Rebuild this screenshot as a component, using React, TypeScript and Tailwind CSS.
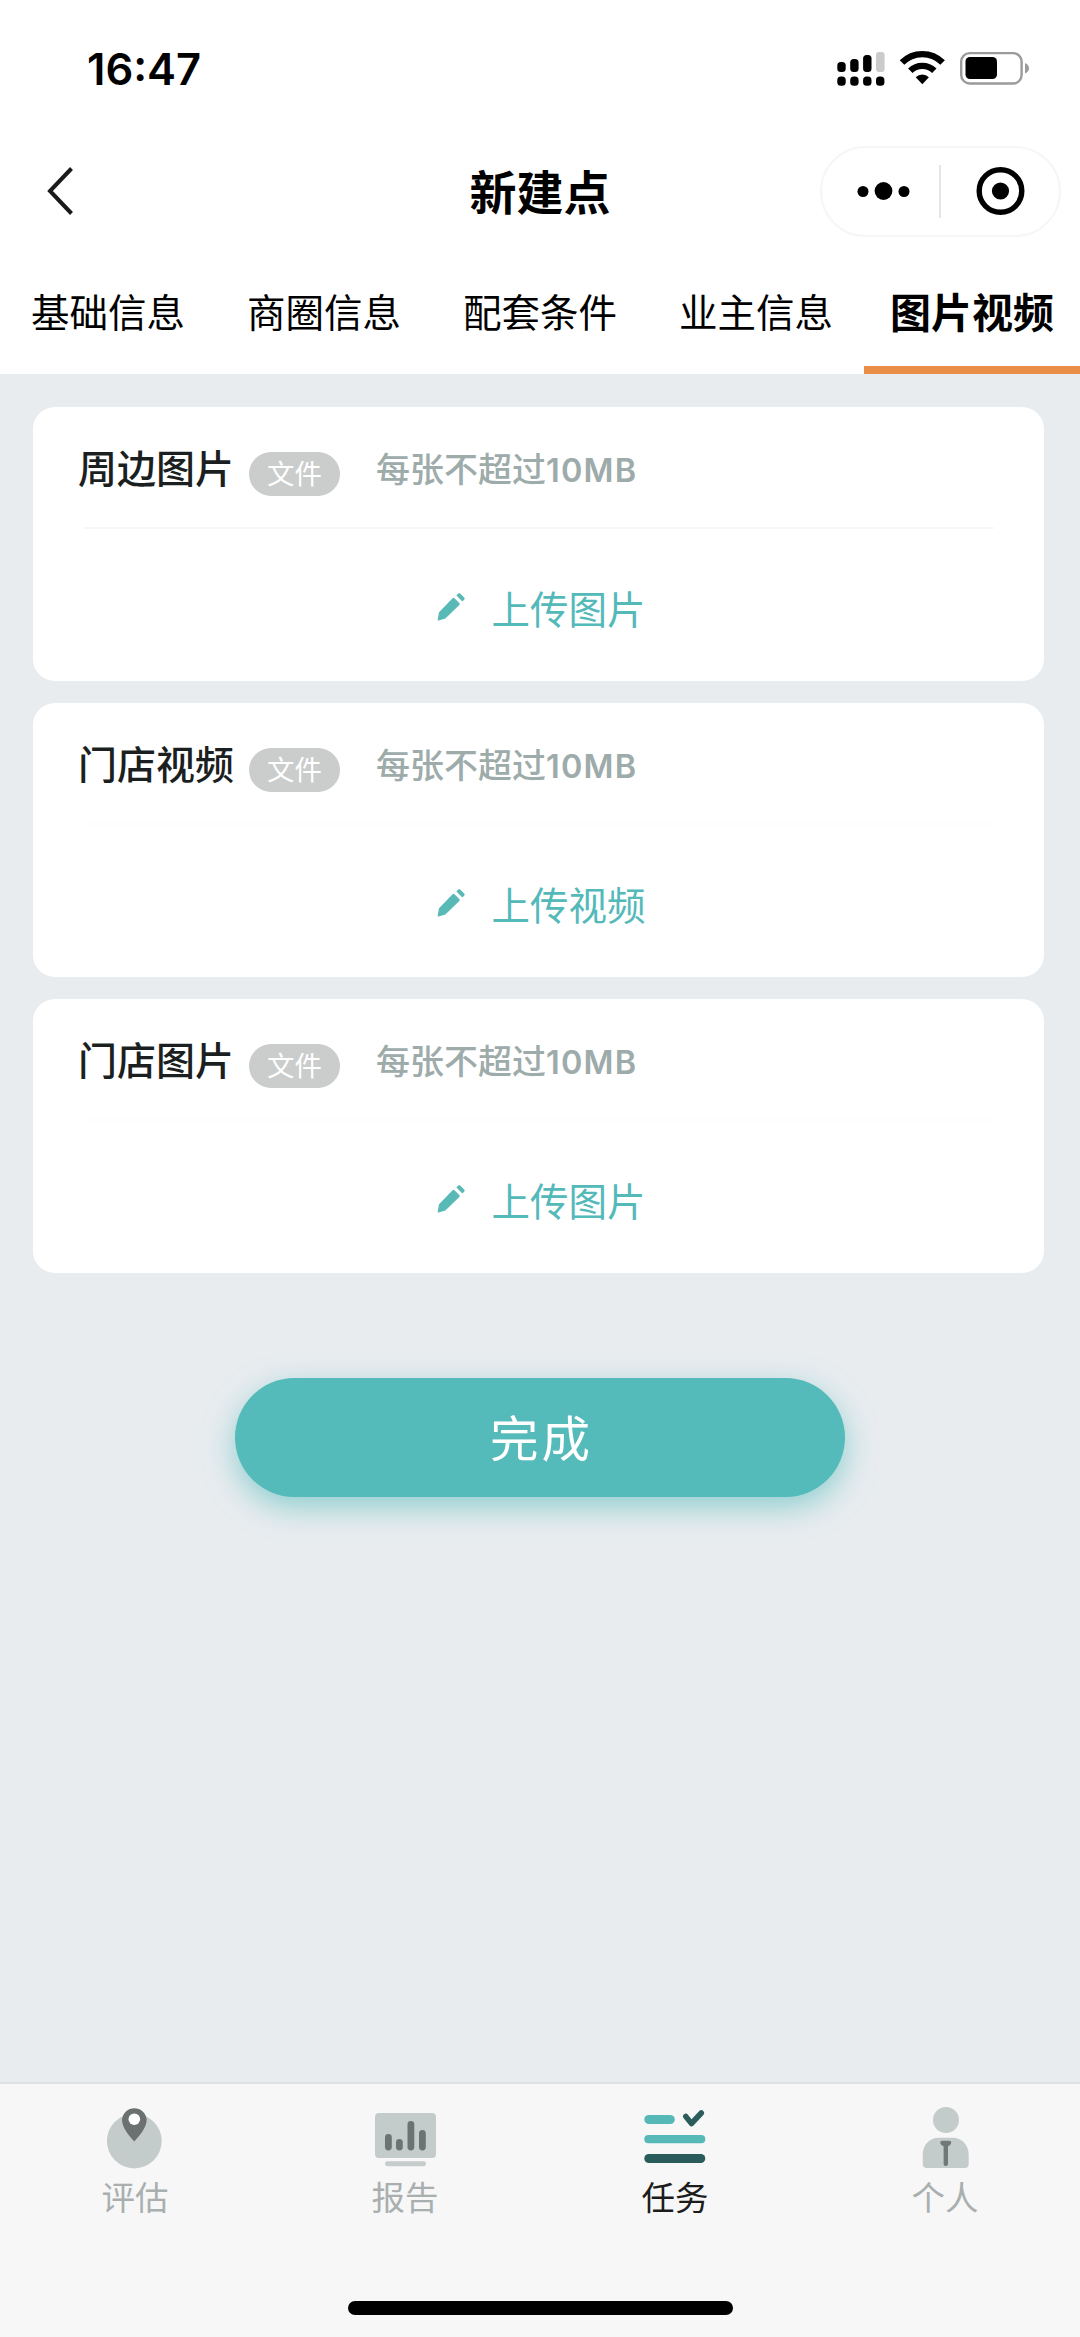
import clsx from "clsx";
import type { ReactNode } from "react";

const tabs = ["基础信息", "商圈信息", "配套条件", "业主信息", "图片视频"];

const sections = [
  { title: "周边图片", action: "上传图片", line: "bg-[#f7f8f8]" },
  { title: "门店视频", action: "上传视频", line: "bg-[#fdfdfd]" },
  { title: "门店图片", action: "上传图片", line: "bg-[#fdfdfd]" },
];

function StatusBar() {
  return (
    <div className="flex h-[138px] items-start justify-between pl-[87px] pr-[50px]">
      <span className="mt-[43px] font-['Inter'] text-[43.5px] font-semibold leading-[52px] text-black">
        16:47
      </span>
      <svg className="mt-[48px]" width="194" height="40" viewBox="836 48 194 40">
        <rect x="837.3" y="62" width="8.4" height="10" rx="3.5" />
        <rect x="850.2" y="59" width="8.4" height="13" rx="3.5" />
        <rect x="863.1" y="55" width="8.4" height="17" rx="3.5" />
        <rect x="876" y="52" width="8.6" height="20" rx="3" fill="#cbcbcb" />
        <rect x="837.3" y="76.6" width="8.4" height="9.2" rx="3.6" />
        <rect x="850.2" y="76.6" width="8.4" height="9.2" rx="3.6" />
        <rect x="863.1" y="76.6" width="8.4" height="9.2" rx="3.6" />
        <rect x="876" y="76.6" width="8.4" height="9.2" rx="3.6" />
        <g fill="none" stroke="#000">
          <path d="M902 62.6a28.6 28.6 0 0 1 40.6 0" strokeWidth="6.4" />
          <path d="M910.3 70.8a17 17 0 0 1 24 0" strokeWidth="6.2" />
        </g>
        <path d="M922.3 84.2l-6.6-6.9a9.4 9.4 0 0 1 13.2 0z" />
        <rect x="961.2" y="53.1" width="60.4" height="30.4" rx="8.5" fill="#fff" stroke="#9b9b9b" strokeWidth="2.4" />
        <rect x="965.5" y="57" width="31.5" height="22" rx="4.5" />
        <path d="M1025 63c5.4 2 5.4 8.6 0 10.6z" fill="#9b9b9b" />
      </svg>
    </div>
  );
}

function NavBar() {
  return (
    <div className="grid h-[108px] grid-cols-[1fr_auto_1fr] items-center pb-[2px]">
      <svg className="ml-[44px]" width="34" height="52" viewBox="0 0 34 52" fill="none" stroke="#1a1a1a" strokeWidth="4">
        <path d="M27.5 3.5L6 26l21.5 22.5" />
      </svg>
      <h1 className="-mt-[3px] text-[47px] font-bold leading-[60px] text-black">新建点</h1>
      <div className="mr-[19px] flex h-[91px] w-[241px] items-center justify-self-end rounded-full border-2 border-[#f6f6f6]">
        <svg width="237" height="87" viewBox="0 0 237 87">
          <circle cx="41" cy="43.5" r="5.5" />
          <circle cx="61.5" cy="43" r="8.9" />
          <circle cx="82" cy="43.5" r="5.5" />
          <path d="M118 17v53" stroke="#dcdcdc" strokeWidth="1.5" />
          <circle cx="178.5" cy="43" r="21.3" fill="none" stroke="#000" strokeWidth="5.4" />
          <circle cx="178.5" cy="43" r="8.6" />
        </svg>
      </div>
    </div>
  );
}

function Pencil() {
  return (
    <svg width="28" height="30" viewBox="0 0 28 30" fill="#58b9b6">
      <path d="M15.6 6.2q.9-.9 1.8 0l4.9 4.9q.8.9 0 1.8L8.4 26.6 1.6 28.6q-1 .1-.9-.9L2 20.2z" />
      <path d="M19.4 3.4l1.8-2q.9-1 1.9 0l4.1 4q.9 1 .1 2l-1.9 2z" />
    </svg>
  );
}

function UploadCard({ title, action, line }: (typeof sections)[number]) {
  return (
    <section className="flex h-[274px] flex-col rounded-[22px] bg-white">
      <div className="flex h-[120px] items-center pl-[45px]">
        <h2 className="-mt-[2px] text-[39px] font-medium leading-[48px] text-[#1c1f1f]">{title}</h2>
        <span className="ml-[15px] mt-[13px] flex h-[44px] w-[91px] items-center justify-center rounded-full bg-[#cbcccc] pb-[4px] text-[27.5px] leading-[40px] text-white">
          文件
        </span>
        <span className="ml-[36px] mt-[4px] text-[34px] font-medium leading-[48px] text-[#9dabaa]">
          每张不超过<span className="font-['Inter'] text-[32.5px] font-semibold tracking-[1.2px]">10MB</span>
        </span>
      </div>
      <div className={clsx("mx-[50px] h-[2px]", line)} />
      <button className="flex flex-1 items-center justify-center gap-[26px] pl-[6px] pt-[3px] text-[38.5px] leading-[50px] text-[#53b9b9]">
        <Pencil />
        {action}
      </button>
    </section>
  );
}

function TabItem({ label, active, children }: { label: string; active?: boolean; children: ReactNode }) {
  return (
    <a className="flex flex-col items-center pt-[20px]">
      <svg width="66" height="66" viewBox="0 0 66 66">
        {children}
      </svg>
      <span className={clsx("mt-[4px] text-[33.5px] leading-[44px]", active ? "text-[#1c1c1c]" : "text-[#a9afaf]")}>
        {label}
      </span>
    </a>
  );
}

function TabBar() {
  return (
    <nav className="flex h-[255px] flex-col border-t-2 border-[#dfe1e1] bg-[#f7f7f7]">
      <div className="grid grid-cols-4">
        <TabItem label="评估">
          <circle cx="32.3" cy="37" r="27.4" fill="#c4cccb" />
          <path d="M32.3 37.5C28 32.5 20 24.5 20 15.5a12.4 12.4 0 0 1 24.7 0c0 9-8.2 17-12.4 22z" fill="#6a7170" />
          <circle cx="32.3" cy="15.2" r="5.8" fill="#fff" />
        </TabItem>
        <TabItem label="报告">
          <rect x="3" y="9" width="61" height="45" rx="4" fill="#c4cccb" />
          <g fill="#6a7573">
            <rect x="13" y="30" width="6.8" height="16.5" rx="3.4" />
            <rect x="24" y="35" width="6.8" height="11.5" rx="3.4" />
            <rect x="35.5" y="17" width="6.8" height="29.5" rx="3.4" />
            <rect x="47" y="26" width="6.8" height="20.5" rx="3.4" />
          </g>
          <rect x="13" y="57.2" width="41" height="5" rx="2.4" fill="#c6cccb" />
        </TabItem>
        <TabItem label="任务" active>
          <rect x="2.3" y="11" width="30.5" height="9" rx="4.5" fill="#56b9b7" />
          <rect x="2.3" y="31" width="61" height="8.3" rx="4.1" fill="#56b9b7" />
          <rect x="2.3" y="50" width="61" height="9" rx="4.5" fill="#295c5b" />
          <path d="M43.8 12.5l5.7 7L59.3 9" fill="none" stroke="#295c5b" strokeWidth="5.5" strokeLinecap="round" strokeLinejoin="round" />
        </TabItem>
        <TabItem label="个人">
          <circle cx="34" cy="16" r="13" fill="#c4cccb" />
          <path d="M10.7 60V50.5c0-9.5 7-16.8 16-16.8h14c9 0 16 7.3 16 16.8V60q0 4-4 4h-38q-4 0-4-4z" fill="#c4cccb" />
          <path d="M30.3 36.8h6.8q2.4 0 2.2 2-.5 2.6-3.3 3.4V60q0 2-2.2 2t-2.2-2V42.2q-2.9-.8-3.4-3.4-.2-2 2.1-2z" fill="#717978" />
        </TabItem>
      </div>
      <div className="mx-auto mb-[22px] mt-auto h-[14px] w-[385px] rounded-full bg-black" />
    </nav>
  );
}

export default function App() {
  return (
    <div className="flex h-[2337px] w-[1080px] flex-col overflow-hidden bg-[#e8ecef] font-['Noto_Sans_CJK_SC',sans-serif]">
      <header className="bg-white">
        <StatusBar />
        <NavBar />
        <div className="grid h-[128px] grid-cols-5">
          {tabs.map((tab, i) => {
            const active = i === tabs.length - 1;
            return (
              <div
                key={tab}
                className={clsx(
                  "whitespace-nowrap border-b-8 pt-[36px] text-center leading-[56px] text-black",
                  active ? "border-[#ea8e47] text-[41px] font-bold" : "border-transparent text-[38.5px]",
                )}
              >
                {tab}
              </div>
            );
          })}
        </div>
      </header>
      <main className="flex flex-1 flex-col pl-[33px] pr-[36px] pt-[33px]">
        <div className="flex flex-col gap-[22px]">
          {sections.map((s) => (
            <UploadCard key={s.title} {...s} />
          ))}
        </div>
        <button className="ml-[202px] mt-[105px] h-[119px] w-[610px] rounded-full bg-[#54baba] pb-[3px] pl-[3px] text-[48.5px] tracking-[3px] text-white shadow-[0_10px_30px_rgba(84,186,186,0.6)]">
          完成
        </button>
      </main>
      <TabBar />
    </div>
  );
}
